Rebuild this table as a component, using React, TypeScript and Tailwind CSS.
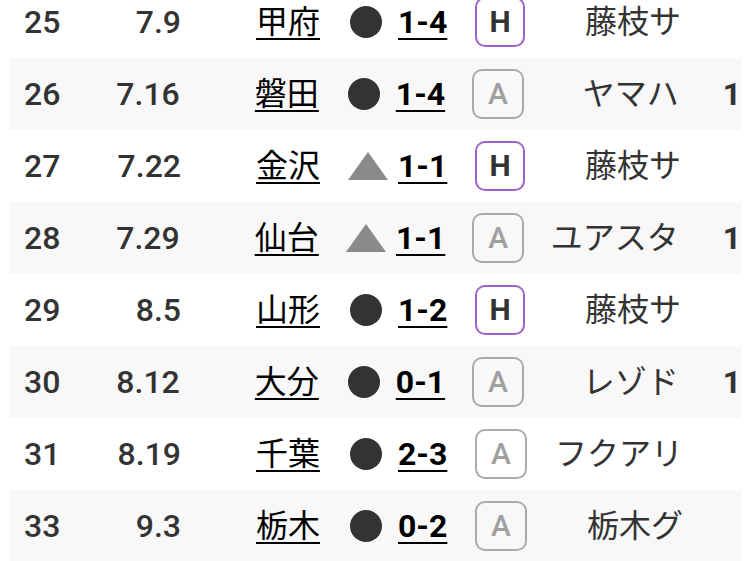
import React from "react";

type Row = {
  no: string;
  date: string;
  team: string;
  res: "lose" | "draw" | "win";
  score: string;
  ha: "H" | "A";
  venue: string;
  extra?: string;
};

const rows: Row[] = [
  { no: "25", date: "7.9", team: "甲府", res: "lose", score: "1-4", ha: "H", venue: "藤枝サ" },
  { no: "26", date: "7.16", team: "磐田", res: "lose", score: "1-4", ha: "A", venue: "ヤマハ", extra: "1" },
  { no: "27", date: "7.22", team: "金沢", res: "draw", score: "1-1", ha: "H", venue: "藤枝サ" },
  { no: "28", date: "7.29", team: "仙台", res: "draw", score: "1-1", ha: "A", venue: "ユアスタ", extra: "1" },
  { no: "29", date: "8.5", team: "山形", res: "lose", score: "1-2", ha: "H", venue: "藤枝サ" },
  { no: "30", date: "8.12", team: "大分", res: "lose", score: "0-1", ha: "A", venue: "レゾド", extra: "1" },
  { no: "31", date: "8.19", team: "千葉", res: "lose", score: "2-3", ha: "A", venue: "フクアリ" },
  { no: "33", date: "9.3", team: "栃木", res: "lose", score: "0-2", ha: "A", venue: "栃木グ" },
];

function ResultIcon({ res }: { res: Row["res"] }) {
  if (res === "draw") {
    return (
      <svg width="40" height="28" viewBox="0 0 40 28">
        <polygon points="20,0 40,28 0,28" fill="#8a8a8a" />
      </svg>
    );
  }
  return <div className="ml-[2px] w-[32px] h-[32px] rounded-full bg-[#333333]" />;
}

export default function App() {
  return (
    <div
      className="w-[750px] h-[561px] overflow-hidden bg-white"
      style={{ fontFamily: 'Roboto, "Noto Sans CJK JP", sans-serif' }}
    >
      <div className="-mt-[14px] px-[9px]">
        {rows.map((r, i) => (
          <div
            key={r.no}
            className={`flex items-center h-[72px] text-[32px] leading-none whitespace-nowrap ${
              i % 2 === 1 ? "bg-[#f8f8f8]" : "bg-white"
            }`}
          >
            <div className="w-[60px] pl-[15px] font-medium text-[#333333]">{r.no}</div>
            <div className="w-[112px] text-right font-medium text-[#333333]">{r.date}</div>
            <div className="ml-[75px] w-[92px]">
              <span className="text-black underline decoration-[2px] underline-offset-[5px]">{r.team}</span>
            </div>
            <div className="w-[40px] flex justify-start items-center">
              <ResultIcon res={r.res} />
            </div>
            <div className="ml-[10px] w-[77px]">
              <span className="font-bold text-black underline decoration-[2px] underline-offset-[5px]">{r.score}</span>
            </div>
            {r.ha === "H" ? (
              <div className="w-[50px] h-[50px] rounded-[10px] border-2 border-[#a062c6] flex items-center justify-center font-bold text-[30px] text-[#333333]">
                H
              </div>
            ) : (
              <div className="w-[52px] h-[50px] rounded-[10px] border-2 border-[#aaaaaa] flex items-center justify-center font-medium text-[30px] text-[#a0a0a0]">
                A
              </div>
            )}
            <div className="w-[156px] text-right text-[#333333]">{r.venue}</div>
            <div className="ml-[44px] font-bold text-[#333333]">{r.extra ?? ""}</div>
          </div>
        ))}
      </div>
    </div>
  );
}
